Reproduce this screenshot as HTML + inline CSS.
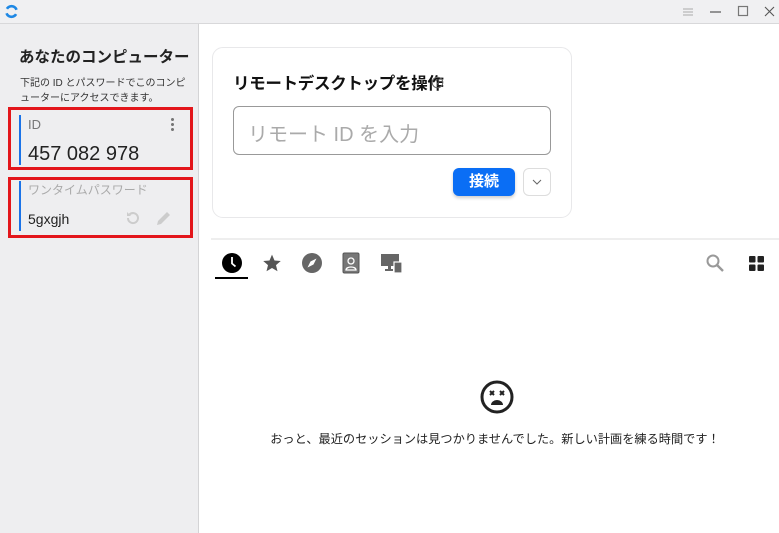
<!DOCTYPE html>
<html><head><meta charset="utf-8"><style>
*{margin:0;padding:0;box-sizing:border-box}
body{width:779px;height:533px;overflow:hidden;background:#fff;font-family:"Liberation Sans","Noto Sans CJK JP",sans-serif;position:relative;color:#222}
.abs{position:absolute;white-space:nowrap}
#tb{left:0;top:0;width:779px;height:24px;background:#f0f0f2;border-bottom:1px solid #d8d8da}
#side{left:0;top:24px;width:199px;height:509px;background:#eeeef0;border-right:1px solid #d4d4d6}
.red{border:3px solid #e3161b}
.bl{width:2px;background:#1a73e8}
</style></head><body>
<div id="tb" class="abs">
<svg class="abs" style="left:4px;top:4px" width="15" height="15" viewBox="0 0 15 15"><circle cx="7.5" cy="7.5" r="5.3" fill="none" stroke="#1e88e5" stroke-width="2.6" stroke-dasharray="12 4.6" transform="rotate(30 7.5 7.5)"/></svg>
<svg class="abs" style="left:682px;top:6px" width="12" height="12"><path d="M1 3h10M1 6h10M1 9h10" stroke="#aaa" stroke-width="1"/></svg>
<svg class="abs" style="left:709px;top:6px" width="12" height="12"><path d="M1 6h11" stroke="#555" stroke-width="1.2"/></svg>
<svg class="abs" style="left:737px;top:5px" width="12" height="12"><rect x="1.5" y="1.5" width="9" height="9" fill="none" stroke="#777" stroke-width="1.2"/></svg>
<svg class="abs" style="left:764px;top:6px" width="12" height="12"><path d="M1 1l9 9M10 1l-9 9" stroke="#555" stroke-width="1.1"/></svg>
</div>
<div id="side" class="abs"></div>
<div class="abs" style="left:19px;top:45px;font-size:15.5px;font-weight:bold;color:#222">あなたのコンピューター</div>
<div class="abs" style="left:20px;top:76px;font-size:10px;line-height:15px;color:#333;width:172px;white-space:normal">下記の ID とパスワードでこのコンピューターにアクセスできます。</div>
<div class="abs red" style="left:8px;top:107px;width:185px;height:63px"></div>
<div class="abs bl" style="left:19px;top:115px;height:50px"></div>
<div class="abs" style="left:28px;top:117px;font-size:13px;color:#777">ID</div>
<div class="abs" style="left:171px;top:117px;width:3px;height:14px;background:radial-gradient(circle,#777 1.4px,transparent 1.6px) 0 0/3px 5px"></div>
<div class="abs" style="left:28px;top:143px;font-size:20px;color:#222">457 082 978</div>
<div class="abs red" style="left:8px;top:177px;width:185px;height:61px"></div>
<div class="abs bl" style="left:19px;top:181px;height:50px"></div>
<div class="abs" style="left:28px;top:181px;font-size:12px;color:#aaa">ワンタイムパスワード</div>
<div class="abs" style="left:28px;top:211px;font-size:14px;color:#222">5gxgjh</div>
<svg class="abs" style="left:125px;top:210px" width="16" height="16" viewBox="0 0 16 16"><path d="M3 8a5 5 0 1 0 1.5-3.5" fill="none" stroke="#ccc" stroke-width="2"/><path d="M2 2v4h4z" fill="#ccc"/></svg>
<svg class="abs" style="left:155px;top:209px" width="18" height="18" viewBox="0 0 18 18"><path d="M2 16l1-4 9-9 3 3-9 9z" fill="#ccc"/></svg>

<div class="abs" style="left:212px;top:47px;width:360px;height:171px;border:1px solid #e8e8ea;border-radius:11px"></div>
<div class="abs" style="left:233px;top:70px;font-size:16.5px;color:#111;font-weight:bold;letter-spacing:-0.3px">リモートデスクトップを操作</div>
<svg class="abs" style="left:431px;top:76px" width="13" height="13"><circle cx="6.5" cy="6.5" r="5.3" fill="none" stroke="#666" stroke-width="1"/><text x="6.5" y="9.5" font-size="8" text-anchor="middle" fill="#666" font-family="Liberation Sans">?</text></svg>
<div class="abs" style="left:233px;top:106px;width:318px;height:49px;border:1px solid #999;border-radius:6px"></div>
<div class="abs" style="left:248px;top:118px;font-size:20px;color:#aaa">リモート ID を入力</div>
<div class="abs" style="left:453px;top:168px;width:62px;height:28px;background:#0a6ef5;border-radius:6px;color:#fff;font-size:15px;font-weight:bold;text-align:center;line-height:28px;box-shadow:0 2px 3px rgba(0,0,0,.2)">接続</div>
<div class="abs" style="left:523px;top:168px;width:28px;height:28px;border:1px solid #ddd;border-radius:6px"></div>
<svg class="abs" style="left:531px;top:177px" width="12" height="10"><path d="M2 3l4 4 4-4" fill="none" stroke="#666" stroke-width="1"/></svg>

<div class="abs" style="left:211px;top:238px;width:568px;height:2px;background:#eee"></div>
<svg class="abs" style="left:221px;top:252px" width="22" height="22"><circle cx="11" cy="11" r="10" fill="#000"/><path d="M11 5v6.5l3.5 3" fill="none" stroke="#fff" stroke-width="1.8"/></svg>
<div class="abs" style="left:215px;top:277px;width:33px;height:2px;background:#000"></div>
<svg class="abs" style="left:261px;top:253px" width="22" height="20" viewBox="0 0 24 24"><path d="M12 2l3 7 7.5.6-5.7 4.9 1.8 7.4L12 18l-6.6 3.9 1.8-7.4L1.5 9.6 9 9z" fill="#555"/></svg>
<svg class="abs" style="left:302px;top:253px" width="20" height="20"><circle cx="10" cy="10" r="10" fill="#666"/><path d="M14.5 5.5l-6 3-3 6 6-3z" fill="#fff"/></svg>
<svg class="abs" style="left:342px;top:252px" width="18" height="22"><rect x="1" y="1" width="16" height="20" rx="1.5" fill="#777" stroke="#555"/><circle cx="9" cy="9" r="3" fill="none" stroke="#fff" stroke-width="1.3"/><path d="M4 18c0-4 10-4 10 0z" fill="none" stroke="#fff" stroke-width="1.3"/></svg>
<svg class="abs" style="left:381px;top:254px" width="22" height="20"><rect x="0" y="0" width="18" height="12" fill="#666"/><rect x="7" y="12" width="3" height="4" fill="#666"/><rect x="4" y="15" width="8" height="2" fill="#666"/><rect x="13" y="8" width="8" height="11" fill="#666" stroke="#fff" stroke-width="1.2"/></svg>
<svg class="abs" style="left:705px;top:253px" width="20" height="20"><circle cx="8" cy="8" r="5.5" fill="none" stroke="#999" stroke-width="2"/><path d="M12 12l6 6" stroke="#999" stroke-width="2.4"/></svg>
<svg class="abs" style="left:749px;top:256px" width="16" height="16"><rect x="0" y="0" width="6.5" height="6.5" rx="1" fill="#222"/><rect x="8.5" y="0" width="6.5" height="6.5" rx="1" fill="#222"/><rect x="0" y="8.5" width="6.5" height="6.5" rx="1" fill="#222"/><rect x="8.5" y="8.5" width="6.5" height="6.5" rx="1" fill="#222"/></svg>

<svg class="abs" style="left:480px;top:380px" width="34" height="34" viewBox="0 0 34 34"><circle cx="17" cy="17" r="15" fill="none" stroke="#222" stroke-width="3"/><path d="M10 11l4 4M14 11l-4 4M20 11l4 4M24 11l-4 4" stroke="#222" stroke-width="2"/><path d="M11 25a6 5 0 0 1 12 0z" fill="#222"/></svg>
<div class="abs" style="left:230px;top:429px;width:530px;text-align:center;font-size:12.2px;color:#222">おっと、最近のセッションは見つかりませんでした。新しい計画を練る時間です！</div>
</body></html>
